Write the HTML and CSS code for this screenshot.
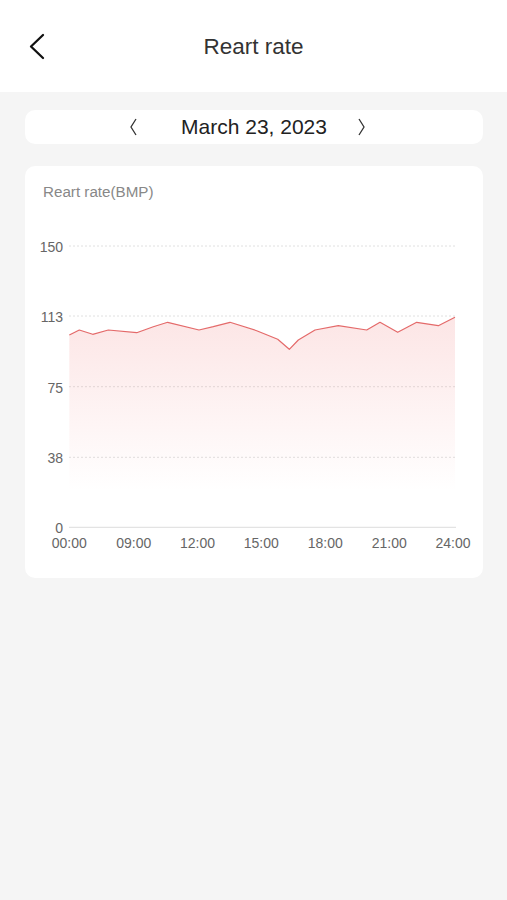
FILE: index.html
```html
<!DOCTYPE html>
<html lang="en">
<head>
    <meta charset="UTF-8">
    <meta name="viewport" content="width=device-width, initial-scale=1.0">
    <title>Reart rate</title>
    <link rel="stylesheet" href="styles.css">
</head>
<body>
    <!-- top bar -->
    <div id="header">
        <a class="back" href="#">
            <svg width="20" height="30" viewBox="0 0 20 30">
                <polyline points="15,4 3,15.5 15,27" fill="none" stroke="#111" stroke-width="2.3" stroke-linecap="round" stroke-linejoin="round"/>
            </svg>
        </a>
        <div class="title">Reart rate</div>
    </div>

    <!-- date switcher -->
    <div class="date-bar">
        <span class="arrow">
            <svg width="10" height="20" viewBox="0 0 10 20">
                <polyline points="8,2 3,10 8,18" fill="none" stroke="#333" stroke-width="1.3"/>
            </svg>
        </span>
        <span class="date">March 23, 2023</span>
        <span class="arrow">
            <svg width="10" height="20" viewBox="0 0 10 20">
                <polyline points="2,2 7,10 2,18" fill="none" stroke="#333" stroke-width="1.3"/>
            </svg>
        </span>
    </div>

    <!-- chart card -->
    <div class="card">
        <div class="card-title">Reart rate(BMP)</div>
        <svg class="chart" width="458" height="377" viewBox="0 0 458 377">
            <defs>
                <linearGradient id="fill" x1="0" y1="0" x2="0" y2="1">
                    <stop offset="0" stop-color="#f07070" stop-opacity="0.18"/>
                    <stop offset="1" stop-color="#f07070" stop-opacity="0"/>
                </linearGradient>
            </defs>

            <!-- grid -->
            <g class="grid">
                <line x1="44" y1="45" x2="431" y2="45"/>
                <line x1="44" y1="115" x2="431" y2="115"/>
                <line x1="44" y1="185.7" x2="431" y2="185.7"/>
                <line x1="44" y1="256.3" x2="431" y2="256.3"/>
            </g>
            <line class="axis" x1="44" y1="326.3" x2="431" y2="326.3"/>

            <!-- area + line -->
            <polygon fill="url(#fill)" points="44.3,134 54.3,129 67.7,133.3 83.3,129 111.7,131.7 128.3,125.7 142.7,121.3 174,129 188.3,125.7 205,121.3 231.7,129.7 252.7,138.3 264.3,148.3 273.3,139 290,129 313.3,124.7 341.7,129 355,121.3 372.7,131.3 391.7,121.3 413.3,124.7 430,116.3 430,290 44.3,290"/>
            <polyline class="line" points="44.3,134 54.3,129 67.7,133.3 83.3,129 111.7,131.7 128.3,125.7 142.7,121.3 174,129 188.3,125.7 205,121.3 231.7,129.7 252.7,138.3 264.3,148.3 273.3,139 290,129 313.3,124.7 341.7,129 355,121.3 372.7,131.3 391.7,121.3 413.3,124.7 430,116.3"/>

            <!-- y labels -->
            <g class="ylabels">
                <text x="38" y="50.7">150</text>
                <text x="38" y="120.7">113</text>
                <text x="38" y="191.5">75</text>
                <text x="38" y="261.7">38</text>
                <text x="38" y="331.7">0</text>
            </g>

            <!-- x labels -->
            <g class="xlabels">
                <text x="44.2" y="346.7">00:00</text>
                <text x="108.7" y="346.7">09:00</text>
                <text x="172.5" y="346.7">12:00</text>
                <text x="236.2" y="346.7">15:00</text>
                <text x="300.2" y="346.7">18:00</text>
                <text x="364.2" y="346.7">21:00</text>
                <text x="428" y="346.7">24:00</text>
            </g>
        </svg>
    </div>
</body>
</html>
```

FILE: styles.css
```css
body {
    margin: 0;
    font-family: "Liberation Sans", Arial, sans-serif;
    background-color: #f5f5f5;
}

#header {
    position: relative;
    height: 92px;
    background-color: white;
    display: flex;
    align-items: center;
    justify-content: center;
}

#header .back {
    position: absolute;
    left: 28px;
    top: 31px;
    display: block;
    line-height: 0;
}

#header .title {
    font-size: 22.5px;
    color: #333;
    padding-top: 1px;
}

.date-bar {
    margin: 18px 24px 0 25px;
    padding-right: 13px;
    height: 34px;
    background-color: white;
    border-radius: 10px;
    display: flex;
    align-items: center;
    justify-content: center;
}

.date-bar .date {
    font-size: 21px;
    color: #222;
    margin: 0 30px 0 43px;
}

.date-bar .arrow {
    display: block;
    line-height: 0;
}

.card {
    margin: 22px 24px 0 25px;
    background-color: white;
    border-radius: 10px;
    padding-top: 17px;
}

.card-title {
    font-size: 15.2px;
    line-height: 18px;
    color: #888;
    padding-left: 18px;
}

.chart {
    display: block;
}

.grid line {
    stroke: #e0e0e0;
    stroke-width: 1;
    stroke-dasharray: 2 2;
}

.axis {
    stroke: #ddd;
    stroke-width: 1;
}

.line {
    fill: none;
    stroke: #e46a6a;
    stroke-width: 1.2;
    stroke-linejoin: round;
}

.ylabels text {
    font-size: 14px;
    fill: #666;
    text-anchor: end;
}

.xlabels text {
    font-size: 14px;
    fill: #666;
    text-anchor: middle;
}
```
